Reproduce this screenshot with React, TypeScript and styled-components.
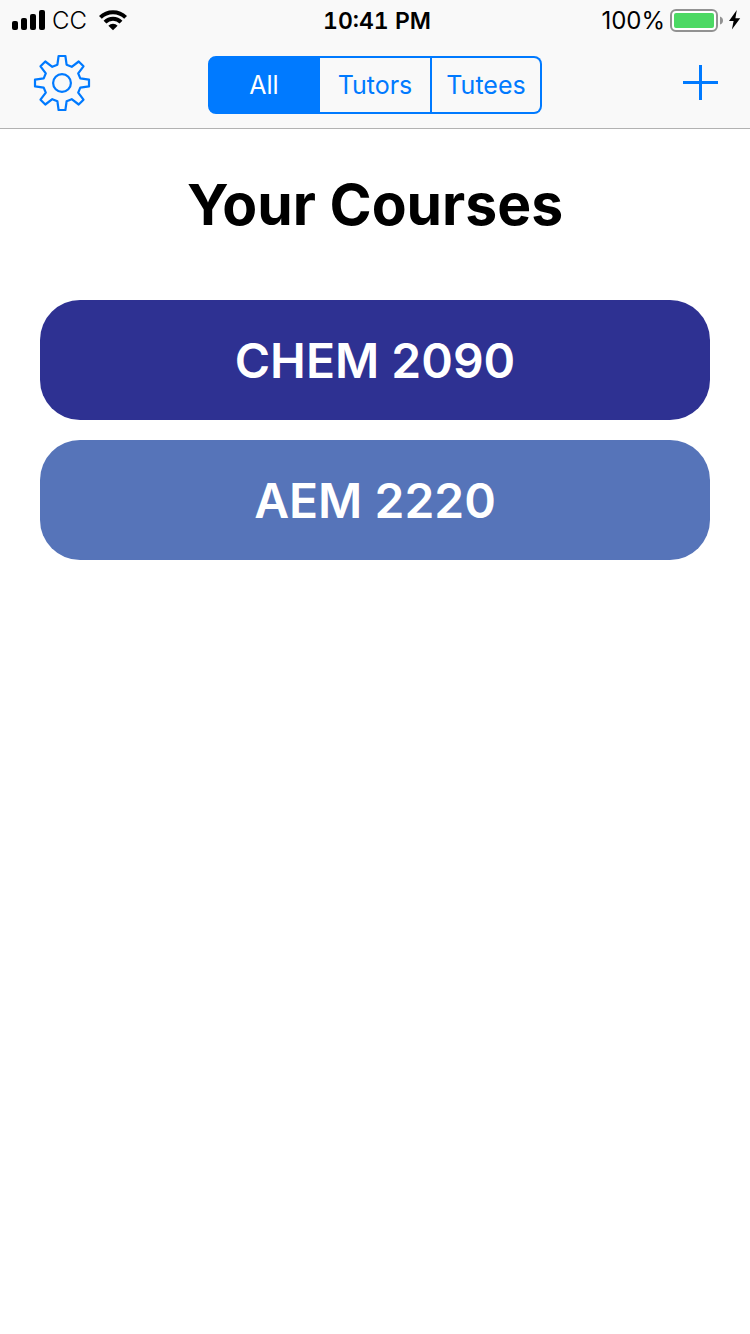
import React, { useState } from "react";
import styled, { createGlobalStyle } from "styled-components";

const blue = "#007aff";

const GlobalStyle = createGlobalStyle`
  *, *::before, *::after { box-sizing: border-box; }
  body {
    margin: 0;
    background: #ffffff;
    color: #000000;
    font-family: Inter, "Liberation Sans", sans-serif;
  }
  button { font-family: inherit; cursor: pointer; }
`;

const Header = styled.header`
  background: #f9f9f9;
  border-bottom: 1px solid #b2b2b2;
`;

const StatusBar = styled.div`
  display: grid;
  grid-template-columns: 1fr auto 1fr;
  align-items: center;
  height: 42px;
  padding: 0 8px 0 12px;
  font-size: 24px;
  line-height: 30px;
`;

const StatusGroup = styled.div<{ $end?: boolean }>`
  display: flex;
  align-items: center;
  justify-content: ${(p) => (p.$end ? "flex-end" : "flex-start")};
  gap: ${(p) => (p.$end ? 5 : 7)}px;
`;

const Carrier = styled.span`
  margin-right: 5px;
  font-weight: 300;
`;

const Time = styled.time`
  font-size: 23px;
  font-weight: 600;
  font-variant-numeric: tabular-nums;
`;

const NavBar = styled.nav`
  display: grid;
  grid-template-columns: 1fr auto 1fr;
  align-items: center;
  height: 86px;
  padding: 0 32px;
`;

const IconButton = styled.button<{ $end?: boolean }>`
  display: flex;
  justify-self: ${(p) => (p.$end ? "end" : "start")};
  margin: 0 0 4px;
  padding: 0;
  border: 0;
  background: none;
  color: ${blue};
`;

const Segments = styled.div`
  display: grid;
  grid-template-columns: 112px 112px 110px;
  height: 58px;
`;

const Segment = styled.button<{ $active: boolean }>`
  padding: 0;
  border: 2px solid ${blue};
  background: ${(p) => (p.$active ? blue : "transparent")};
  color: ${(p) => (p.$active ? "#ffffff" : blue)};
  font-size: 25px;
  line-height: 32px;

  &:first-child {
    border-radius: 8px 0 0 8px;
  }
  & + & {
    border-left: 0;
  }
  &:last-child {
    border-radius: 0 8px 8px 0;
  }
`;

const Main = styled.main`
  padding: 40px;
`;

const Title = styled.h1`
  margin: 0 0 59px;
  font-size: 57px;
  font-weight: 700;
  line-height: 72px;
  text-align: center;
`;

const CourseList = styled.div`
  display: flex;
  flex-direction: column;
  gap: 20px;
`;

const CourseButton = styled.button<{ $color: string }>`
  width: 100%;
  height: 120px;
  padding: 2px 0 0;
  border: 0;
  border-radius: 40px;
  background: ${(p) => p.$color};
  color: #ffffff;
  font-size: 48px;
  font-weight: 600;
  line-height: 60px;
`;

const SignalIcon = () => (
  <svg width="33" height="22" viewBox="0 0 33 22" aria-hidden="true">
    <rect x="0" y="11" width="6" height="9" rx="2" />
    <rect x="9" y="8" width="6" height="12" rx="2" />
    <rect x="18" y="4" width="6" height="16" rx="2" />
    <rect x="27" y="0" width="6" height="20" rx="2" />
  </svg>
);

const WifiIcon = () => (
  <svg width="28" height="22" viewBox="0 0 28 22" aria-hidden="true">
    <g fill="none" stroke="#000" strokeWidth="4">
      <path d="M1.4 7.4A18 18 0 0 1 26.6 7.4" />
      <path d="M6 12.2A11.2 11.2 0 0 1 22 12.2" />
    </g>
    <path d="M9.4 15.8A6.3 6.3 0 0 1 18.6 15.8L14 20.2Z" />
  </svg>
);

const BatteryIcon = () => (
  <svg width="54" height="24" viewBox="0 0 54 24" aria-hidden="true">
    <rect x="1" y="1" width="46" height="21" rx="5" fill="#fff" stroke="#929292" strokeWidth="2" />
    <rect x="4" y="4" width="40" height="15" rx="2" fill="#4cd964" />
    <path d="M50 7.5Q53 8.5 53 11.5Q53 14.5 50 15.5Z" fill="#929292" />
  </svg>
);

const BoltIcon = () => (
  <svg width="13" height="22" viewBox="0 0 13 22" aria-hidden="true">
    <path d="M7.8 0L0 11H4.6L2.9 19.6L11.2 8.3H6.4Z" />
  </svg>
);

const GearIcon = () => (
  <svg
    width="60"
    height="60"
    viewBox="-30 -30 60 60"
    fill="none"
    stroke="currentColor"
    strokeWidth="2.2"
    strokeLinejoin="round"
    aria-hidden="true"
  >
    <path d="M-3.4-27H3.4L4.6-18.3L9.7-16.2L16.7-21.5L21.5-16.7L16.2-9.7L18.3-4.6L27-3.4V3.4L18.3 4.6L16.2 9.7L21.5 16.7L16.7 21.5L9.7 16.2L4.6 18.3L3.4 27H-3.4L-4.6 18.3L-9.7 16.2L-16.7 21.5L-21.5 16.7L-16.2 9.7L-18.3 4.6L-27 3.4V-3.4L-18.3-4.6L-16.2-9.7L-21.5-16.7L-16.7-21.5L-9.7-16.2L-4.6-18.3Z" />
    <circle r="8.9" />
  </svg>
);

const PlusIcon = () => (
  <svg width="35" height="36" viewBox="0 0 35 36" aria-hidden="true">
    <path d="M0 16H35V19H0ZM16 0H19V35H16Z" fill="currentColor" />
  </svg>
);

const filters = ["All", "Tutors", "Tutees"];

const courses = [
  { name: "CHEM 2090", color: "#2e3192" },
  { name: "AEM 2220", color: "#5674b9" },
];

export default function App() {
  const [filter, setFilter] = useState("All");

  return (
    <>
      <GlobalStyle />
      <Header>
        <StatusBar>
          <StatusGroup>
            <SignalIcon />
            <Carrier>CC</Carrier>
            <WifiIcon />
          </StatusGroup>
          <Time>10:41 PM</Time>
          <StatusGroup $end>
            <span>100%</span>
            <BatteryIcon />
            <BoltIcon />
          </StatusGroup>
        </StatusBar>
        <NavBar>
          <IconButton type="button" aria-label="Settings">
            <GearIcon />
          </IconButton>
          <Segments role="group" aria-label="Filter courses">
            {filters.map((name) => (
              <Segment
                key={name}
                type="button"
                $active={name === filter}
                aria-pressed={name === filter}
                onClick={() => setFilter(name)}
              >
                {name}
              </Segment>
            ))}
          </Segments>
          <IconButton type="button" aria-label="Add course" $end>
            <PlusIcon />
          </IconButton>
        </NavBar>
      </Header>
      <Main>
        <Title>Your Courses</Title>
        <CourseList>
          {courses.map((course) => (
            <CourseButton key={course.name} type="button" $color={course.color}>
              {course.name}
            </CourseButton>
          ))}
        </CourseList>
      </Main>
    </>
  );
}
